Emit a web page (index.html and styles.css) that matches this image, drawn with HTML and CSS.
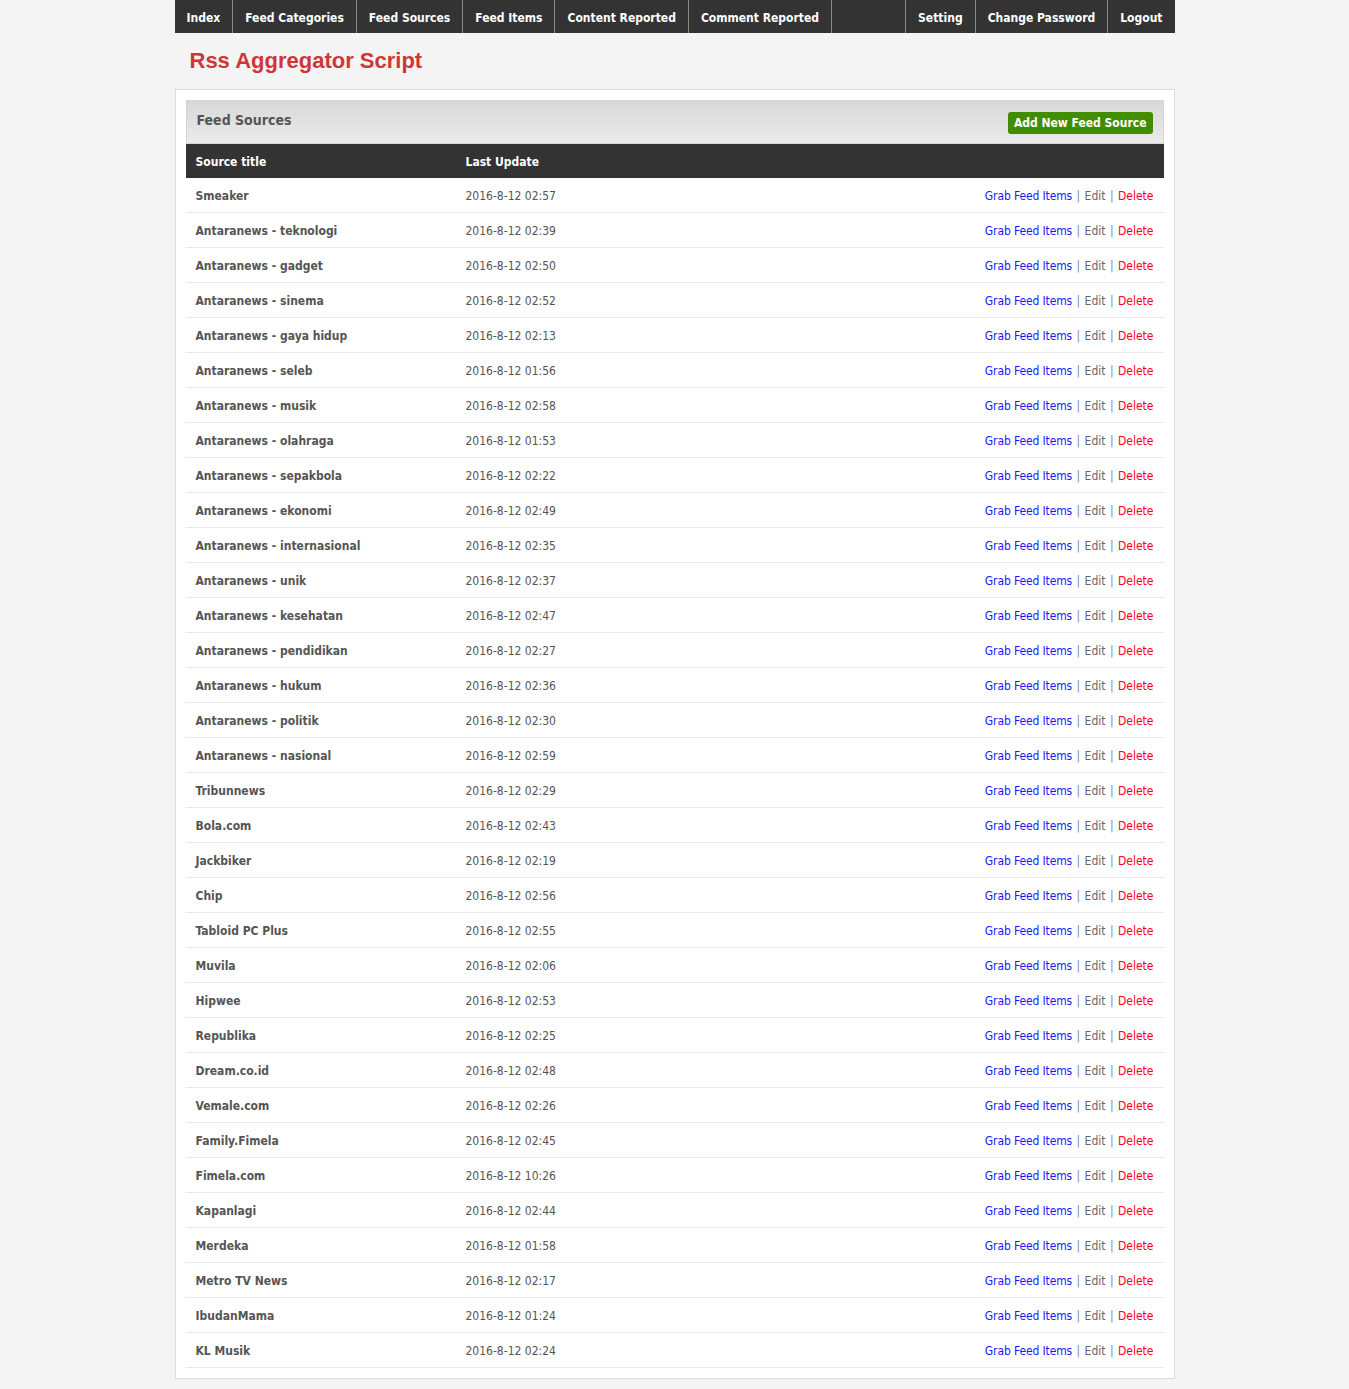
FILE: index.html
```html
<!DOCTYPE html>
<html>
<head>
<meta charset="utf-8">
<title>Rss Aggregator Script</title>
<link rel="stylesheet" href="styles.css">
</head>
<body>
<div class="wrap">
  <nav class="nav">
    <ul class="nav-left">
      <li><a href="#">Index</a></li>
      <li><a href="#">Feed Categories</a></li>
      <li><a href="#">Feed Sources</a></li>
      <li><a href="#">Feed Items</a></li>
      <li><a href="#">Content Reported</a></li>
      <li><a href="#">Comment Reported</a></li>
    </ul>
    <ul class="nav-right">
      <li><a href="#">Setting</a></li>
      <li><a href="#">Change Password</a></li>
      <li><a href="#">Logout</a></li>
    </ul>
  </nav>
  <h1 class="site-title">Rss Aggregator Script</h1>
  <div class="panel">
    <div class="panel-head">
      <h2>Feed Sources</h2>
      <a href="#" class="btn-add">Add New Feed Source</a>
    </div>
    <table class="grid">
      <thead>
        <tr><th class="c1">Source title</th><th class="c2">Last Update</th><th class="c3"></th></tr>
      </thead>
      <tbody>
        <tr><td class="c1">Smeaker</td><td class="c2">2016-8-12 02:57</td><td class="c3"><a class="grab" href="#">Grab Feed Items</a> <span class="sep">|</span> <a class="edit" href="#">Edit</a> <span class="sep">|</span> <a class="del" href="#">Delete</a></td></tr>
        <tr><td class="c1">Antaranews - teknologi</td><td class="c2">2016-8-12 02:39</td><td class="c3"><a class="grab" href="#">Grab Feed Items</a> <span class="sep">|</span> <a class="edit" href="#">Edit</a> <span class="sep">|</span> <a class="del" href="#">Delete</a></td></tr>
        <tr><td class="c1">Antaranews - gadget</td><td class="c2">2016-8-12 02:50</td><td class="c3"><a class="grab" href="#">Grab Feed Items</a> <span class="sep">|</span> <a class="edit" href="#">Edit</a> <span class="sep">|</span> <a class="del" href="#">Delete</a></td></tr>
        <tr><td class="c1">Antaranews - sinema</td><td class="c2">2016-8-12 02:52</td><td class="c3"><a class="grab" href="#">Grab Feed Items</a> <span class="sep">|</span> <a class="edit" href="#">Edit</a> <span class="sep">|</span> <a class="del" href="#">Delete</a></td></tr>
        <tr><td class="c1">Antaranews - gaya hidup</td><td class="c2">2016-8-12 02:13</td><td class="c3"><a class="grab" href="#">Grab Feed Items</a> <span class="sep">|</span> <a class="edit" href="#">Edit</a> <span class="sep">|</span> <a class="del" href="#">Delete</a></td></tr>
        <tr><td class="c1">Antaranews - seleb</td><td class="c2">2016-8-12 01:56</td><td class="c3"><a class="grab" href="#">Grab Feed Items</a> <span class="sep">|</span> <a class="edit" href="#">Edit</a> <span class="sep">|</span> <a class="del" href="#">Delete</a></td></tr>
        <tr><td class="c1">Antaranews - musik</td><td class="c2">2016-8-12 02:58</td><td class="c3"><a class="grab" href="#">Grab Feed Items</a> <span class="sep">|</span> <a class="edit" href="#">Edit</a> <span class="sep">|</span> <a class="del" href="#">Delete</a></td></tr>
        <tr><td class="c1">Antaranews - olahraga</td><td class="c2">2016-8-12 01:53</td><td class="c3"><a class="grab" href="#">Grab Feed Items</a> <span class="sep">|</span> <a class="edit" href="#">Edit</a> <span class="sep">|</span> <a class="del" href="#">Delete</a></td></tr>
        <tr><td class="c1">Antaranews - sepakbola</td><td class="c2">2016-8-12 02:22</td><td class="c3"><a class="grab" href="#">Grab Feed Items</a> <span class="sep">|</span> <a class="edit" href="#">Edit</a> <span class="sep">|</span> <a class="del" href="#">Delete</a></td></tr>
        <tr><td class="c1">Antaranews - ekonomi</td><td class="c2">2016-8-12 02:49</td><td class="c3"><a class="grab" href="#">Grab Feed Items</a> <span class="sep">|</span> <a class="edit" href="#">Edit</a> <span class="sep">|</span> <a class="del" href="#">Delete</a></td></tr>
        <tr><td class="c1">Antaranews - internasional</td><td class="c2">2016-8-12 02:35</td><td class="c3"><a class="grab" href="#">Grab Feed Items</a> <span class="sep">|</span> <a class="edit" href="#">Edit</a> <span class="sep">|</span> <a class="del" href="#">Delete</a></td></tr>
        <tr><td class="c1">Antaranews - unik</td><td class="c2">2016-8-12 02:37</td><td class="c3"><a class="grab" href="#">Grab Feed Items</a> <span class="sep">|</span> <a class="edit" href="#">Edit</a> <span class="sep">|</span> <a class="del" href="#">Delete</a></td></tr>
        <tr><td class="c1">Antaranews - kesehatan</td><td class="c2">2016-8-12 02:47</td><td class="c3"><a class="grab" href="#">Grab Feed Items</a> <span class="sep">|</span> <a class="edit" href="#">Edit</a> <span class="sep">|</span> <a class="del" href="#">Delete</a></td></tr>
        <tr><td class="c1">Antaranews - pendidikan</td><td class="c2">2016-8-12 02:27</td><td class="c3"><a class="grab" href="#">Grab Feed Items</a> <span class="sep">|</span> <a class="edit" href="#">Edit</a> <span class="sep">|</span> <a class="del" href="#">Delete</a></td></tr>
        <tr><td class="c1">Antaranews - hukum</td><td class="c2">2016-8-12 02:36</td><td class="c3"><a class="grab" href="#">Grab Feed Items</a> <span class="sep">|</span> <a class="edit" href="#">Edit</a> <span class="sep">|</span> <a class="del" href="#">Delete</a></td></tr>
        <tr><td class="c1">Antaranews - politik</td><td class="c2">2016-8-12 02:30</td><td class="c3"><a class="grab" href="#">Grab Feed Items</a> <span class="sep">|</span> <a class="edit" href="#">Edit</a> <span class="sep">|</span> <a class="del" href="#">Delete</a></td></tr>
        <tr><td class="c1">Antaranews - nasional</td><td class="c2">2016-8-12 02:59</td><td class="c3"><a class="grab" href="#">Grab Feed Items</a> <span class="sep">|</span> <a class="edit" href="#">Edit</a> <span class="sep">|</span> <a class="del" href="#">Delete</a></td></tr>
        <tr><td class="c1">Tribunnews</td><td class="c2">2016-8-12 02:29</td><td class="c3"><a class="grab" href="#">Grab Feed Items</a> <span class="sep">|</span> <a class="edit" href="#">Edit</a> <span class="sep">|</span> <a class="del" href="#">Delete</a></td></tr>
        <tr><td class="c1">Bola.com</td><td class="c2">2016-8-12 02:43</td><td class="c3"><a class="grab" href="#">Grab Feed Items</a> <span class="sep">|</span> <a class="edit" href="#">Edit</a> <span class="sep">|</span> <a class="del" href="#">Delete</a></td></tr>
        <tr><td class="c1">Jackbiker</td><td class="c2">2016-8-12 02:19</td><td class="c3"><a class="grab" href="#">Grab Feed Items</a> <span class="sep">|</span> <a class="edit" href="#">Edit</a> <span class="sep">|</span> <a class="del" href="#">Delete</a></td></tr>
        <tr><td class="c1">Chip</td><td class="c2">2016-8-12 02:56</td><td class="c3"><a class="grab" href="#">Grab Feed Items</a> <span class="sep">|</span> <a class="edit" href="#">Edit</a> <span class="sep">|</span> <a class="del" href="#">Delete</a></td></tr>
        <tr><td class="c1">Tabloid PC Plus</td><td class="c2">2016-8-12 02:55</td><td class="c3"><a class="grab" href="#">Grab Feed Items</a> <span class="sep">|</span> <a class="edit" href="#">Edit</a> <span class="sep">|</span> <a class="del" href="#">Delete</a></td></tr>
        <tr><td class="c1">Muvila</td><td class="c2">2016-8-12 02:06</td><td class="c3"><a class="grab" href="#">Grab Feed Items</a> <span class="sep">|</span> <a class="edit" href="#">Edit</a> <span class="sep">|</span> <a class="del" href="#">Delete</a></td></tr>
        <tr><td class="c1">Hipwee</td><td class="c2">2016-8-12 02:53</td><td class="c3"><a class="grab" href="#">Grab Feed Items</a> <span class="sep">|</span> <a class="edit" href="#">Edit</a> <span class="sep">|</span> <a class="del" href="#">Delete</a></td></tr>
        <tr><td class="c1">Republika</td><td class="c2">2016-8-12 02:25</td><td class="c3"><a class="grab" href="#">Grab Feed Items</a> <span class="sep">|</span> <a class="edit" href="#">Edit</a> <span class="sep">|</span> <a class="del" href="#">Delete</a></td></tr>
        <tr><td class="c1">Dream.co.id</td><td class="c2">2016-8-12 02:48</td><td class="c3"><a class="grab" href="#">Grab Feed Items</a> <span class="sep">|</span> <a class="edit" href="#">Edit</a> <span class="sep">|</span> <a class="del" href="#">Delete</a></td></tr>
        <tr><td class="c1">Vemale.com</td><td class="c2">2016-8-12 02:26</td><td class="c3"><a class="grab" href="#">Grab Feed Items</a> <span class="sep">|</span> <a class="edit" href="#">Edit</a> <span class="sep">|</span> <a class="del" href="#">Delete</a></td></tr>
        <tr><td class="c1">Family.Fimela</td><td class="c2">2016-8-12 02:45</td><td class="c3"><a class="grab" href="#">Grab Feed Items</a> <span class="sep">|</span> <a class="edit" href="#">Edit</a> <span class="sep">|</span> <a class="del" href="#">Delete</a></td></tr>
        <tr><td class="c1">Fimela.com</td><td class="c2">2016-8-12 10:26</td><td class="c3"><a class="grab" href="#">Grab Feed Items</a> <span class="sep">|</span> <a class="edit" href="#">Edit</a> <span class="sep">|</span> <a class="del" href="#">Delete</a></td></tr>
        <tr><td class="c1">Kapanlagi</td><td class="c2">2016-8-12 02:44</td><td class="c3"><a class="grab" href="#">Grab Feed Items</a> <span class="sep">|</span> <a class="edit" href="#">Edit</a> <span class="sep">|</span> <a class="del" href="#">Delete</a></td></tr>
        <tr><td class="c1">Merdeka</td><td class="c2">2016-8-12 01:58</td><td class="c3"><a class="grab" href="#">Grab Feed Items</a> <span class="sep">|</span> <a class="edit" href="#">Edit</a> <span class="sep">|</span> <a class="del" href="#">Delete</a></td></tr>
        <tr><td class="c1">Metro TV News</td><td class="c2">2016-8-12 02:17</td><td class="c3"><a class="grab" href="#">Grab Feed Items</a> <span class="sep">|</span> <a class="edit" href="#">Edit</a> <span class="sep">|</span> <a class="del" href="#">Delete</a></td></tr>
        <tr><td class="c1">IbudanMama</td><td class="c2">2016-8-12 01:24</td><td class="c3"><a class="grab" href="#">Grab Feed Items</a> <span class="sep">|</span> <a class="edit" href="#">Edit</a> <span class="sep">|</span> <a class="del" href="#">Delete</a></td></tr>
        <tr><td class="c1">KL Musik</td><td class="c2">2016-8-12 02:24</td><td class="c3"><a class="grab" href="#">Grab Feed Items</a> <span class="sep">|</span> <a class="edit" href="#">Edit</a> <span class="sep">|</span> <a class="del" href="#">Delete</a></td></tr>
      </tbody>
    </table>
  </div>
</div>
</body>
</html>
```

FILE: styles.css
```css
html, body {
  margin: 0;
  padding: 0;
}
body {
  background: #f4f4f4;
  font-family: "DejaVu Sans Condensed", "DejaVu Sans", sans-serif;
  font-size: 12px;
  color: #555;
}
a { text-decoration: none; }
.wrap {
  width: 1000px;
  margin: 0 auto;
  padding-bottom: 11px;
}
.nav {
  display: flex;
  justify-content: space-between;
  background: #333;
  height: 33px;
}
.nav ul {
  display: flex;
  list-style: none;
  margin: 0;
  padding: 0;
}
.nav li a {
  display: block;
  color: #fff;
  font-weight: bold;
  font-size: 12px;
  line-height: 30px;
  padding: 3px 12px 0;
}
.nav-left li { border-right: 1px solid #8a8a8a; }
.nav-right li { border-left: 1px solid #8a8a8a; }
.site-title {
  margin: 0;
  padding: 15px 15px 15px;
  font-family: "Liberation Sans", Arial, sans-serif;
  font-size: 22px;
  line-height: 26px;
  font-weight: bold;
  color: #d03636;
}
.panel {
  background: #fff;
  border: 1px solid #dcdcdc;
  padding: 10px;
}
.panel-head {
  display: flex;
  justify-content: space-between;
  align-items: center;
  height: 42px;
  padding: 0 10px;
  border: 1px solid #d4d4d4;
  background: linear-gradient(#d8d8d8, #ebebeb);
}
.panel-head h2 {
  margin: 0 0 4px;
  font-size: 14px;
  font-weight: bold;
  color: #555;
}
.btn-add {
  display: block;
  background: #428c00;
  color: #fff;
  font-weight: bold;
  font-size: 12px;
  line-height: 22px;
  padding: 0 6px;
  border-radius: 3px;
  margin-top: 1px;
}
.grid {
  width: 100%;
  border-collapse: collapse;
}
.grid th {
  background: #333;
  color: #fff;
  font-weight: bold;
  text-align: left;
  height: 32px;
  padding: 2px 10px 0;
  font-size: 12px;
}
.grid td {
  height: 32px;
  padding: 2px 10px 0;
  border-bottom: 1px solid #e8e8e8;
  color: #555;
}
.grid .c1 { width: 250px; font-weight: bold; }
.grid .c2 { width: 250px; }
.grid td.c3 { text-align: right; }
.grab { color: #1a1aff; letter-spacing: -0.12px; }
.edit { color: #666; }
.del { color: #ff0022; }
.sep { color: #7a8ab0; margin: 0 1px; }
```
